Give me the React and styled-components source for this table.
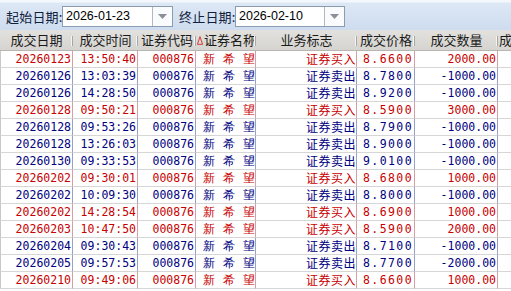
import React from "react";
import styled, { createGlobalStyle } from "styled-components";

const Global = createGlobalStyle`
  html, body { margin: 0; padding: 0; background: #ffffff; }
  body { width: 511px; height: 291px; overflow: hidden; font-family: "Noto Sans CJK SC", sans-serif; }
`;

const Page = styled.div`
  width: 511px;
  height: 291px;
  display: flex;
  flex-direction: column;
  overflow: hidden;
  background: #ffffff;
`;

const Toolbar = styled.div`
  height: 30px;
  box-sizing: border-box;
  display: flex;
  align-items: center;
  padding: 3px 0 0 6px;
  background: linear-gradient(#f4f8fd 0px, #f4f8fd 2px, #dde8f5 3px, #cddcef 100%);
`;

const Label = styled.span`
  font-family: "Noto Sans CJK SC", sans-serif;
  font-size: 13px;
  line-height: 16px;
  color: #10203a;
  width: ${(p) => p.$w}px;
  white-space: nowrap;
  letter-spacing: 0.2px;
`;

const Combo = styled.div`
  width: ${(p) => p.$w}px;
  height: 21px;
  box-sizing: border-box;
  border: 1px solid #8c9cb0;
  background: #ffffff;
  display: flex;
  margin-right: ${(p) => p.$mr || 0}px;
`;

const ComboText = styled.div`
  flex: 1;
  font-family: "Liberation Sans", sans-serif;
  font-size: 12.5px;
  line-height: 19px;
  padding-left: 3px;
  color: #000;
`;

const ComboBtn = styled.div`
  width: 19px;
  border-left: 1px solid #b0b8c4;
  display: flex;
  align-items: center;
  justify-content: center;
  background: #fafbfc;
`;

const Grid = styled.div`
  display: grid;
  grid-template-columns: 73px 65px 58px 60px 101px 58px 83px 1fr;
  grid-template-rows: 21px;
  grid-auto-rows: 17px;
`;

const HeadRow = styled.div`
  display: contents;
`;

const HeadCell = styled.div`
  height: 21px;
  box-sizing: border-box;
  background: linear-gradient(#e2e1de, #d6d4d0);
  border-bottom: 1px solid #b8b6b0;
  font-family: "Noto Sans CJK SC", sans-serif;
  font-size: 13px;
  line-height: 16px;
  color: #1a1a1a;
  display: flex;
  align-items: center;
  justify-content: ${(p) => (p.$left ? "flex-start" : "center")};
  padding-left: ${(p) => (p.$left ? 1 : 0)}px;
  position: relative;
  white-space: nowrap;
  overflow: hidden;
  &::after {
    content: "";
    position: absolute;
    right: 0;
    top: 6px;
    bottom: 4px;
    width: 1px;
    background: #a9a7a2;
    box-shadow: -1px 0 0 #f4f4f2;
    display: ${(p) => (p.$last ? "none" : "block")};
  }
`;

const Row = styled.div`
  display: contents;
`;

const Cell = styled.div`
  box-sizing: border-box;
  height: 17px;
  border-bottom: 1px solid #d6d6d6;
  border-right: 1px solid ${(p) => (p.$buy ? "#d6a0a0" : "#9aa0c8")};
  border-left: ${(p) => (p.$first ? "1px solid #c8c8c8" : "none")};
  color: ${(p) => (p.$buy ? "#c80000" : "#000080")};
  font-family: ${(p) => (p.$cjk ? '"Noto Sans CJK SC", sans-serif' : '"DejaVu Sans Mono", monospace')};
  font-size: ${(p) => (p.$cjk ? 12 : 11.5)}px;
  letter-spacing: ${(p) => p.$ls || 0}px;
  line-height: 16px;
  padding-right: ${(p) => p.$pr ?? 1}px;
  white-space: nowrap;
  display: flex;
  justify-content: flex-end;
  align-items: center;
`;

const NameCell = styled(Cell)`
  font-size: 12px;
  letter-spacing: 8px;
  padding-right: 0;
  span { margin-right: -8px; }
`;

const EmptyCell = styled.div`
  box-sizing: border-box;
  height: 17px;
  border-bottom: 1px solid #d6d6d6;
`;

const SortMark = () => (
  <svg width="7" height="11" viewBox="0 0 7 11" style={{ marginRight: 1 }}>
    <path d="M3.5 1 L6.5 10 L0.5 10 Z" fill="none" stroke="#d02020" strokeWidth="1" />
  </svg>
);

const Arrow = () => (
  <svg width="9" height="5" viewBox="0 0 9 5">
    <path d="M0 0 L9 0 L4.5 5 Z" fill="#8a8f98" />
  </svg>
);

const rows = [
  ["20260123", "13:50:40", 1, "8.6600", "2000.00"],
  ["20260126", "13:03:39", 0, "8.7800", "-1000.00"],
  ["20260126", "14:28:50", 0, "8.9200", "-1000.00"],
  ["20260128", "09:50:21", 1, "8.5900", "3000.00"],
  ["20260128", "09:53:26", 0, "8.7900", "-1000.00"],
  ["20260128", "13:26:03", 0, "8.9000", "-1000.00"],
  ["20260130", "09:33:53", 0, "9.0100", "-1000.00"],
  ["20260202", "09:30:01", 1, "8.6800", "1000.00"],
  ["20260202", "10:09:30", 0, "8.8000", "-1000.00"],
  ["20260202", "14:28:54", 1, "8.6900", "1000.00"],
  ["20260203", "10:47:50", 1, "8.5900", "2000.00"],
  ["20260204", "09:30:43", 0, "8.7100", "-1000.00"],
  ["20260205", "09:57:53", 0, "8.7700", "-2000.00"],
  ["20260210", "09:49:06", 1, "8.6600", "1000.00"],
];

const headers = ["成交日期", "成交时间", "证券代码", "证券名称", "业务标志", "成交价格", "成交数量", "成"];

export default function App() {
  return (
    <Page>
      <Global />
      <Toolbar>
        <Label $w={56}>起始日期:</Label>
        <Combo $w={111} $mr={6}>
          <ComboText>2026-01-23</ComboText>
          <ComboBtn><Arrow /></ComboBtn>
        </Combo>
        <Label $w={56}>终止日期:</Label>
        <Combo $w={110}>
          <ComboText>2026-02-10</ComboText>
          <ComboBtn><Arrow /></ComboBtn>
        </Combo>
      </Toolbar>
      <Grid>
        <HeadRow>
          {headers.map((h, i) => (
            <HeadCell key={h} $left={i === 3 || i === 7} $last={i === 7}>
              {i === 3 && <SortMark />}
              {h}
            </HeadCell>
          ))}
        </HeadRow>
        {rows.map(([d, t, buy, price, qty], i) => (
          <Row key={i}>
            <Cell $buy={buy} $first>{d}</Cell>
            <Cell $buy={buy}>{t}</Cell>
            <Cell $buy={buy}>000876</Cell>
            <NameCell $buy={buy}><span>新希望</span></NameCell>
            <Cell $buy={buy} $cjk $pr={0} $ls={0.5}>{buy ? "证券买入" : "证券卖出"}</Cell>
            <Cell $buy={buy} $ls={1.4}>{price}</Cell>
            <Cell $buy={buy}>{qty}</Cell>
            <EmptyCell />
          </Row>
        ))}
      </Grid>
    </Page>
  );
}
